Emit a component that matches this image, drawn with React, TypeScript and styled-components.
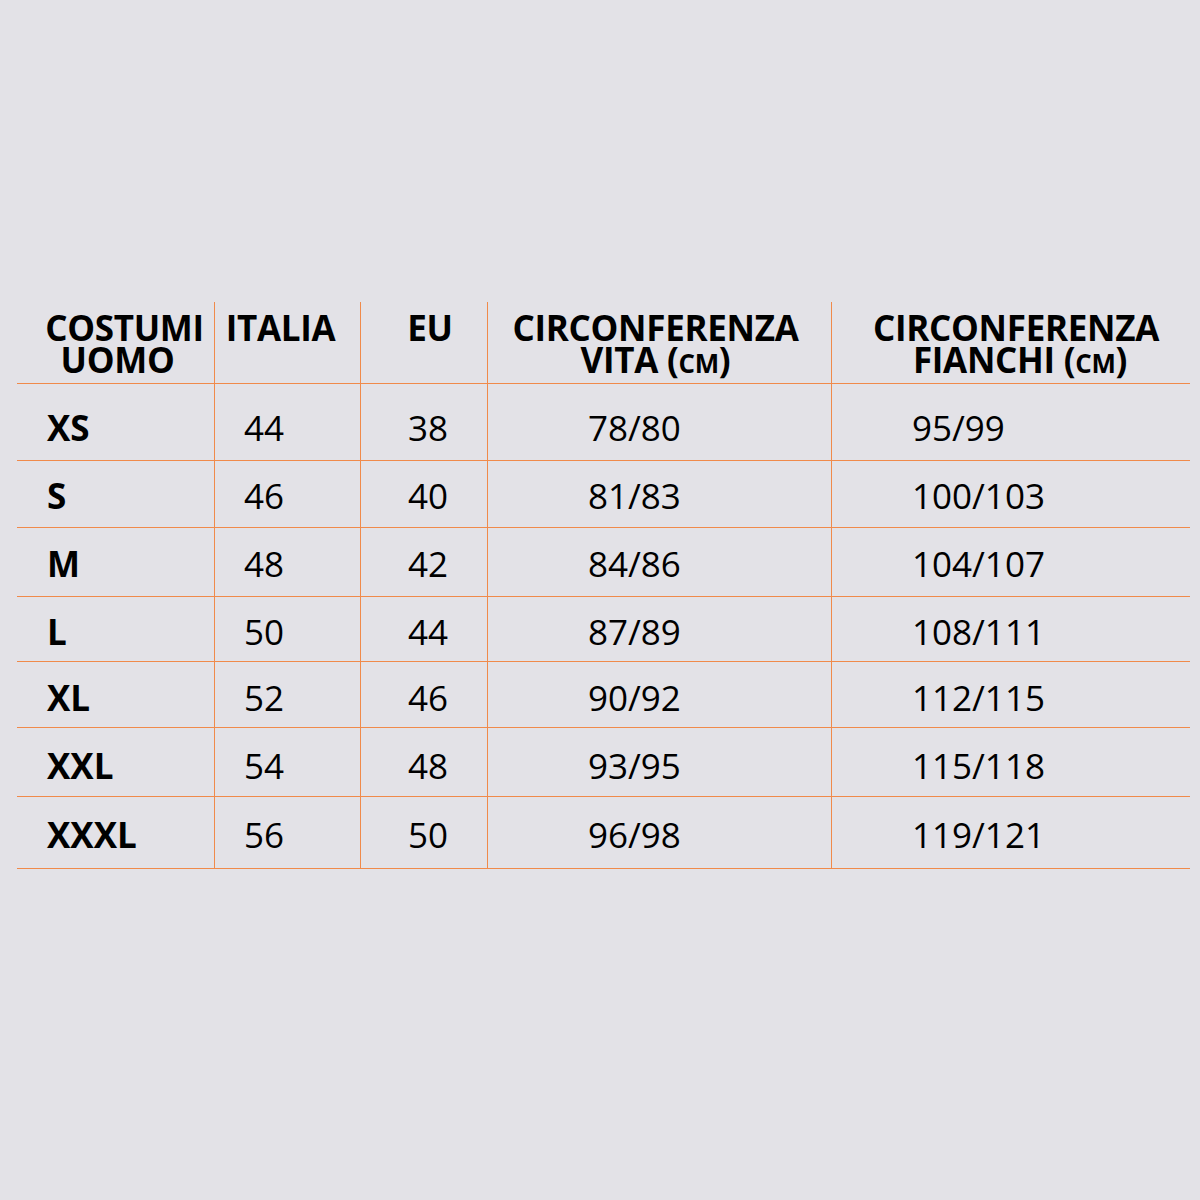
import * as React from 'react'
import styled, { createGlobalStyle } from 'styled-components'

const GlobalStyle = createGlobalStyle`
  html, body {
    margin: 0;
    padding: 0;
    background: #e3e2e7;
  }
  body {
    font-family: "Open Sans", "Noto Sans", sans-serif;
    color: #000;
  }
`

const LINE = '#f08a4b'
const COLUMNS = '197px 146px 127px 344px 359px'

const Page = styled.div`
  width: 1200px;
  height: 1200px;
  padding: 302px 0 0 17px;
  box-sizing: border-box;
`

const Table = styled.div`
  width: 1173px;
  display: flex;
  flex-direction: column;
`

const Row = styled.div<{ $height: number }>`
  display: grid;
  grid-template-columns: ${COLUMNS};
  height: ${(p) => p.$height}px;
  border-bottom: 1px solid ${LINE};
  box-sizing: border-box;
`

const HeadCell = styled.div<{ $first?: boolean }>`
  border-left: ${(p) => (p.$first ? 'none' : `1px solid ${LINE}`)};
  padding-top: 10px;
  font-size: 35px;
  font-weight: 700;
  line-height: 32px;
  text-align: center;
  letter-spacing: -0.3px;
`

const Line = styled.div<{ $shift?: number }>`
  white-space: nowrap;
  transform: translateX(${(p) => p.$shift || 0}px);
`

const Small = styled.span`
  font-size: 0.74em;
`

const Cell = styled.div<{ $first?: boolean; $pad: number; $bold?: boolean; $drop: number }>`
  border-left: ${(p) => (p.$first ? 'none' : `1px solid ${LINE}`)};
  display: flex;
  align-items: center;
  padding-left: ${(p) => p.$pad}px;
  padding-top: ${(p) => p.$drop}px;
  font-size: 35px;
  font-weight: ${(p) => (p.$bold ? 700 : 400)};
  white-space: nowrap;
`

const pads = [30, 29, 47, 100, 80]

const rows: { h: number; drop: number; cells: string[] }[] = [
  { h: 77, drop: 10, cells: ['XS', '44', '38', '78/80', '95/99'] },
  { h: 67, drop: 2, cells: ['S', '46', '40', '81/83', '100/103'] },
  { h: 69, drop: 2, cells: ['M', '48', '42', '84/86', '104/107'] },
  { h: 65, drop: 4, cells: ['L', '50', '44', '87/89', '108/111'] },
  { h: 66, drop: 6, cells: ['XL', '52', '46', '90/92', '112/115'] },
  { h: 69, drop: 6, cells: ['XXL', '54', '48', '93/95', '115/118'] },
  { h: 72, drop: 4, cells: ['XXXL', '56', '50', '96/98', '119/121'] },
]

const App: React.FC = () => {
  return (
    <Page>
      <GlobalStyle />
      <Table>
        <Row $height={82}>
          <HeadCell $first>
            <Line $shift={9}>COSTUMI</Line>
            <Line $shift={2}>UOMO</Line>
          </HeadCell>
          <HeadCell>
            <Line $shift={-7}>ITALIA</Line>
          </HeadCell>
          <HeadCell>
            <Line $shift={6}>EU</Line>
          </HeadCell>
          <HeadCell>
            <Line $shift={-4}>CIRCONFERENZA</Line>
            <Line $shift={-4}>
              VITA (<Small>CM</Small>)
            </Line>
          </HeadCell>
          <HeadCell>
            <Line $shift={5}>CIRCONFERENZA</Line>
            <Line $shift={9}>
              FIANCHI (<Small>CM</Small>)
            </Line>
          </HeadCell>
        </Row>
        {rows.map((row, i) => (
          <Row $height={row.h} key={i}>
            {row.cells.map((c, j) => (
              <Cell key={j} $first={j === 0} $pad={pads[j]} $bold={j === 0} $drop={row.drop}>
                {c}
              </Cell>
            ))}
          </Row>
        ))}
      </Table>
    </Page>
  )
}

export default App
